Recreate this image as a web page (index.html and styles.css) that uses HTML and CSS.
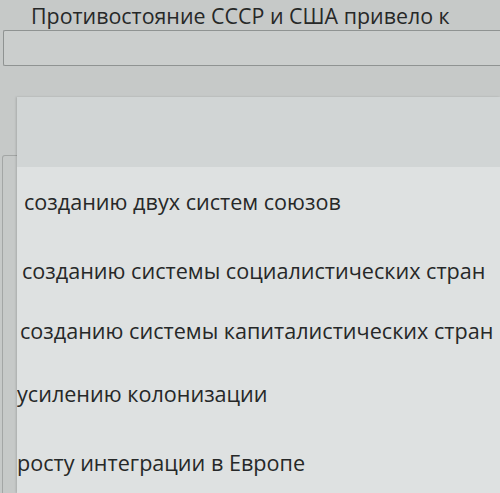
FILE: index.html
```html
<!DOCTYPE html>
<html lang="ru">
<head>
<meta charset="utf-8">
<link rel="stylesheet" href="styles.css">
</head>
<body>
<div class="page">
  <div class="question">Противостояние СССР и США привело к</div>
  <div class="input"></div>
  <div class="under-box"></div>
  <div class="dropdown">
    <div class="dd-head"></div>
    <ul class="options">
      <li class="opt o1">созданию двух систем союзов</li>
      <li class="opt o2">созданию системы социалистических стран</li>
      <li class="opt o3">созданию системы капиталистических стран</li>
      <li class="opt o4">усилению колонизации</li>
      <li class="opt o5">росту интеграции в Европе</li>
    </ul>
  </div>
</div>
</body>
</html>
```
FILE: styles.css
```css
html, body {
  margin: 0;
  padding: 0;
  background: #c6c9c8;
  overflow: hidden;
}
.page {
  position: relative;
  width: 500px;
  height: 493px;
  overflow: hidden;
  font-family: "Open Sans", "Noto Sans", sans-serif;
  color: #262828;
}
.question {
  padding: 3px 0 0 31px;
  font-size: 21.4px;
  line-height: 26px;
  height: 27px;
  white-space: nowrap;
}
.input {
  margin-left: 3px;
  width: 497px;
  height: 36px;
  border: 1px solid #8f9392;
  border-right: none;
  border-radius: 2px 0 0 2px;
  background: #cbcecd;
  box-sizing: border-box;
}
.under-box {
  position: absolute;
  left: 2px;
  top: 155px;
  width: 30px;
  height: 338px;
  border: 1px solid #a3a6a5;
  border-bottom: none;
  border-radius: 3px 0 0 0;
  box-sizing: border-box;
}
.dropdown {
  position: absolute;
  left: 17px;
  top: 97px;
  width: 483px;
  height: 396px;
  overflow: hidden;
  background: #dee1e1;
  box-shadow: -1px 0 2px rgba(0,0,0,0.15);
}
.dd-head {
  height: 70px;
  background: #d1d5d5;
}
.options {
  list-style: none;
  margin: 0;
  padding: 0;
}
.opt {
  font-size: 21.6px;
  height: 63px;
  line-height: 63px;
  white-space: nowrap;
}
.o1 { padding-left: 7px; margin-top: 3px; }
.o2 { padding-left: 5px; margin-top: 6px; }
.o3 { padding-left: 3px; margin-top: -3px; }
.o4 { padding-left: 0px; }
.o5 { padding-left: 0px; margin-top: 6px; }
```
